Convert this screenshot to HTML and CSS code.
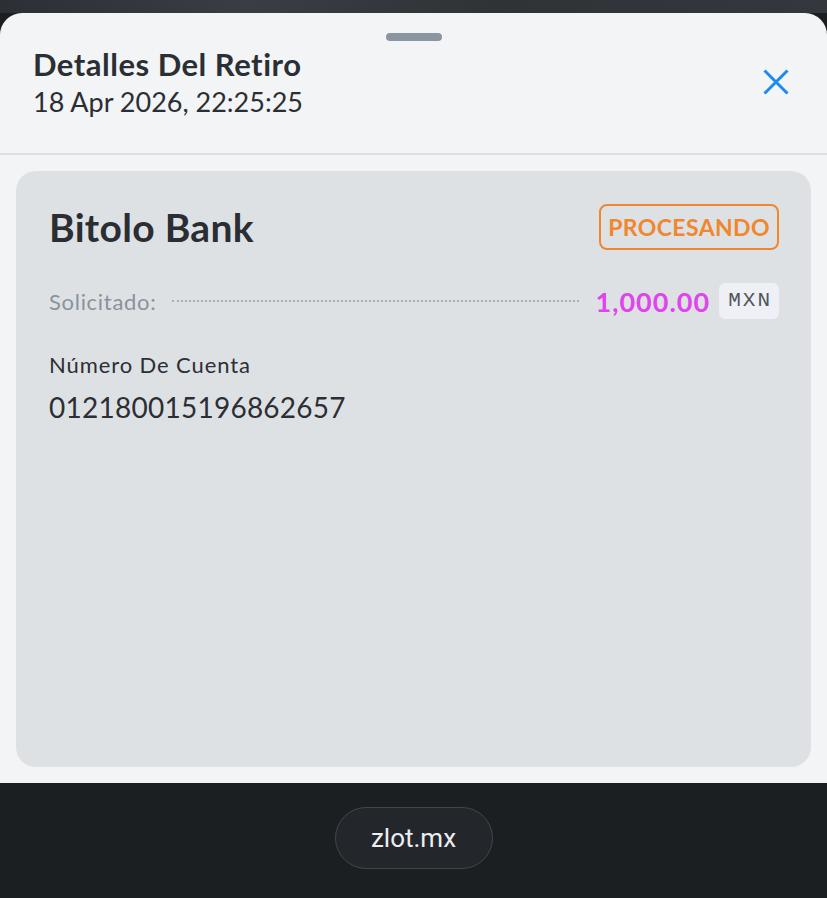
FILE: index.html
```html
<!DOCTYPE html>
<html lang="es">
<head>
    <meta charset="UTF-8">
    <meta name="viewport" content="width=device-width, initial-scale=1.0">
    <title>Detalles Del Retiro</title>
    <link rel="stylesheet" href="styles.css">
</head>
<body>
    <div class="backdrop"></div>
    <div class="sheet">
        <div class="sheet-header">
            <div class="handle"></div>
            <div class="header-row">
                <div>
                    <h2 class="title">Detalles Del Retiro</h2>
                    <div class="date">18 Apr 2026, 22:25:25</div>
                </div>
                <button class="close" aria-label="Cerrar">
                    <svg width="26" height="26" viewBox="0 0 26 26">
                        <path d="M1.5 1.5 L24.5 24.5 M24.5 1.5 L1.5 24.5" stroke="#1a8cf0" stroke-width="3" fill="none"/>
                    </svg>
                </button>
            </div>
        </div>
        <div class="card">
            <div class="card-top">
                <div class="bank">Bitolo Bank</div>
                <div class="status">PROCESANDO</div>
            </div>
            <div class="amount-row">
                <span class="label">Solicitado:</span>
                <span class="dots"></span>
                <span class="amount">1,000.00</span>
                <span class="currency">MXN</span>
            </div>
            <div class="field-label">Número De Cuenta</div>
            <div class="field-value">012180015196862657</div>
        </div>
    </div>
    <div class="footer">
        <div class="site-pill">zlot.mx</div>
    </div>
</body>
</html>
```

FILE: styles.css
```css
body {
    margin: 0;
    font-family: Lato, "Noto Sans", sans-serif;
    background: #1c1f22;
    color: #2b2f34;
    width: 827px;
    height: 898px;
    overflow: hidden;
}
.backdrop {
    height: 13px;
    background: linear-gradient(90deg, #2c3036, #3a3e44 30%, #2f3338 60%, #34383e);
}
.sheet {
    height: 770px;
    background: #f3f4f6;
    border-radius: 22px 22px 0 0;
    display: flex;
    flex-direction: column;
}
.sheet-header {
    border-bottom: 2px solid #dcdfe2;
    padding: 0 33px 35px;
}
.handle {
    width: 56px;
    height: 8px;
    border-radius: 4px;
    background: #8a95a1;
    margin: 20px auto 5px;
}
.header-row {
    display: flex;
    justify-content: space-between;
    align-items: center;
}
.title {
    margin: 0;
    font-size: 31px;
    line-height: 36px;
    font-weight: 700;
    letter-spacing: 0.5px;
    color: #2b2f34;
}
.date {
    margin-top: 4px;
    font-size: 27px;
    line-height: 32px;
    color: #2b2f34;
}
.close {
    background: none;
    border: none;
    padding: 0;
    margin-right: 5px;
    display: flex;
    cursor: pointer;
}
.card {
    flex: 1;
    margin: 16px;
    background: #dee1e4;
    border-radius: 20px;
    padding: 33px 32px 0 33px;
}
.card-top {
    display: flex;
    justify-content: space-between;
    align-items: center;
    height: 46px;
}
.bank {
    font-size: 39px;
    font-weight: 700;
    letter-spacing: 0.3px;
    color: #2a2e33;
}
.status {
    border: 2px solid #f0872e;
    border-radius: 8px;
    color: #f0872e;
    font-weight: 700;
    font-size: 23px;
    letter-spacing: 0.4px;
    padding: 0 7px;
    height: 42px;
    line-height: 42px;
}
.amount-row {
    display: flex;
    align-items: center;
    margin-top: 33px;
    height: 36px;
}
.label {
    font-size: 22px;
    letter-spacing: 0.7px;
    color: #8a929c;
}
.dots {
    flex: 1;
    border-top: 2px dotted #a9aeb4;
    margin: 0 16px;
}
.amount {
    font-size: 27px;
    font-weight: 700;
    letter-spacing: 1px;
    color: #e044ee;
}
.currency {
    margin-left: 9px;
    background: #efeff6;
    border-radius: 6px;
    font-family: "Liberation Mono", monospace;
    font-size: 21px;
    color: #50555b;
    height: 36px;
    line-height: 36px;
    padding: 0 7px 0 9px;
    letter-spacing: 2px;
}
.field-label {
    margin-top: 32px;
    font-size: 22px;
    line-height: 28px;
    letter-spacing: 0.9px;
    color: #2b2f34;
}
.field-value {
    margin-top: 10px;
    font-size: 28px;
    line-height: 36px;
    letter-spacing: 0.25px;
    color: #2b2f34;
}
.footer {
    height: 115px;
    display: flex;
    justify-content: center;
    padding-top: 24px;
    box-sizing: border-box;
}
.site-pill {
    width: 158px;
    height: 62px;
    box-sizing: border-box;
    border-radius: 31px;
    border: 1px solid #41464c;
    background: #23272c;
    color: #ecedee;
    font-family: Roboto, sans-serif;
    font-size: 26px;
    display: flex;
    align-items: center;
    justify-content: center;
}
```
